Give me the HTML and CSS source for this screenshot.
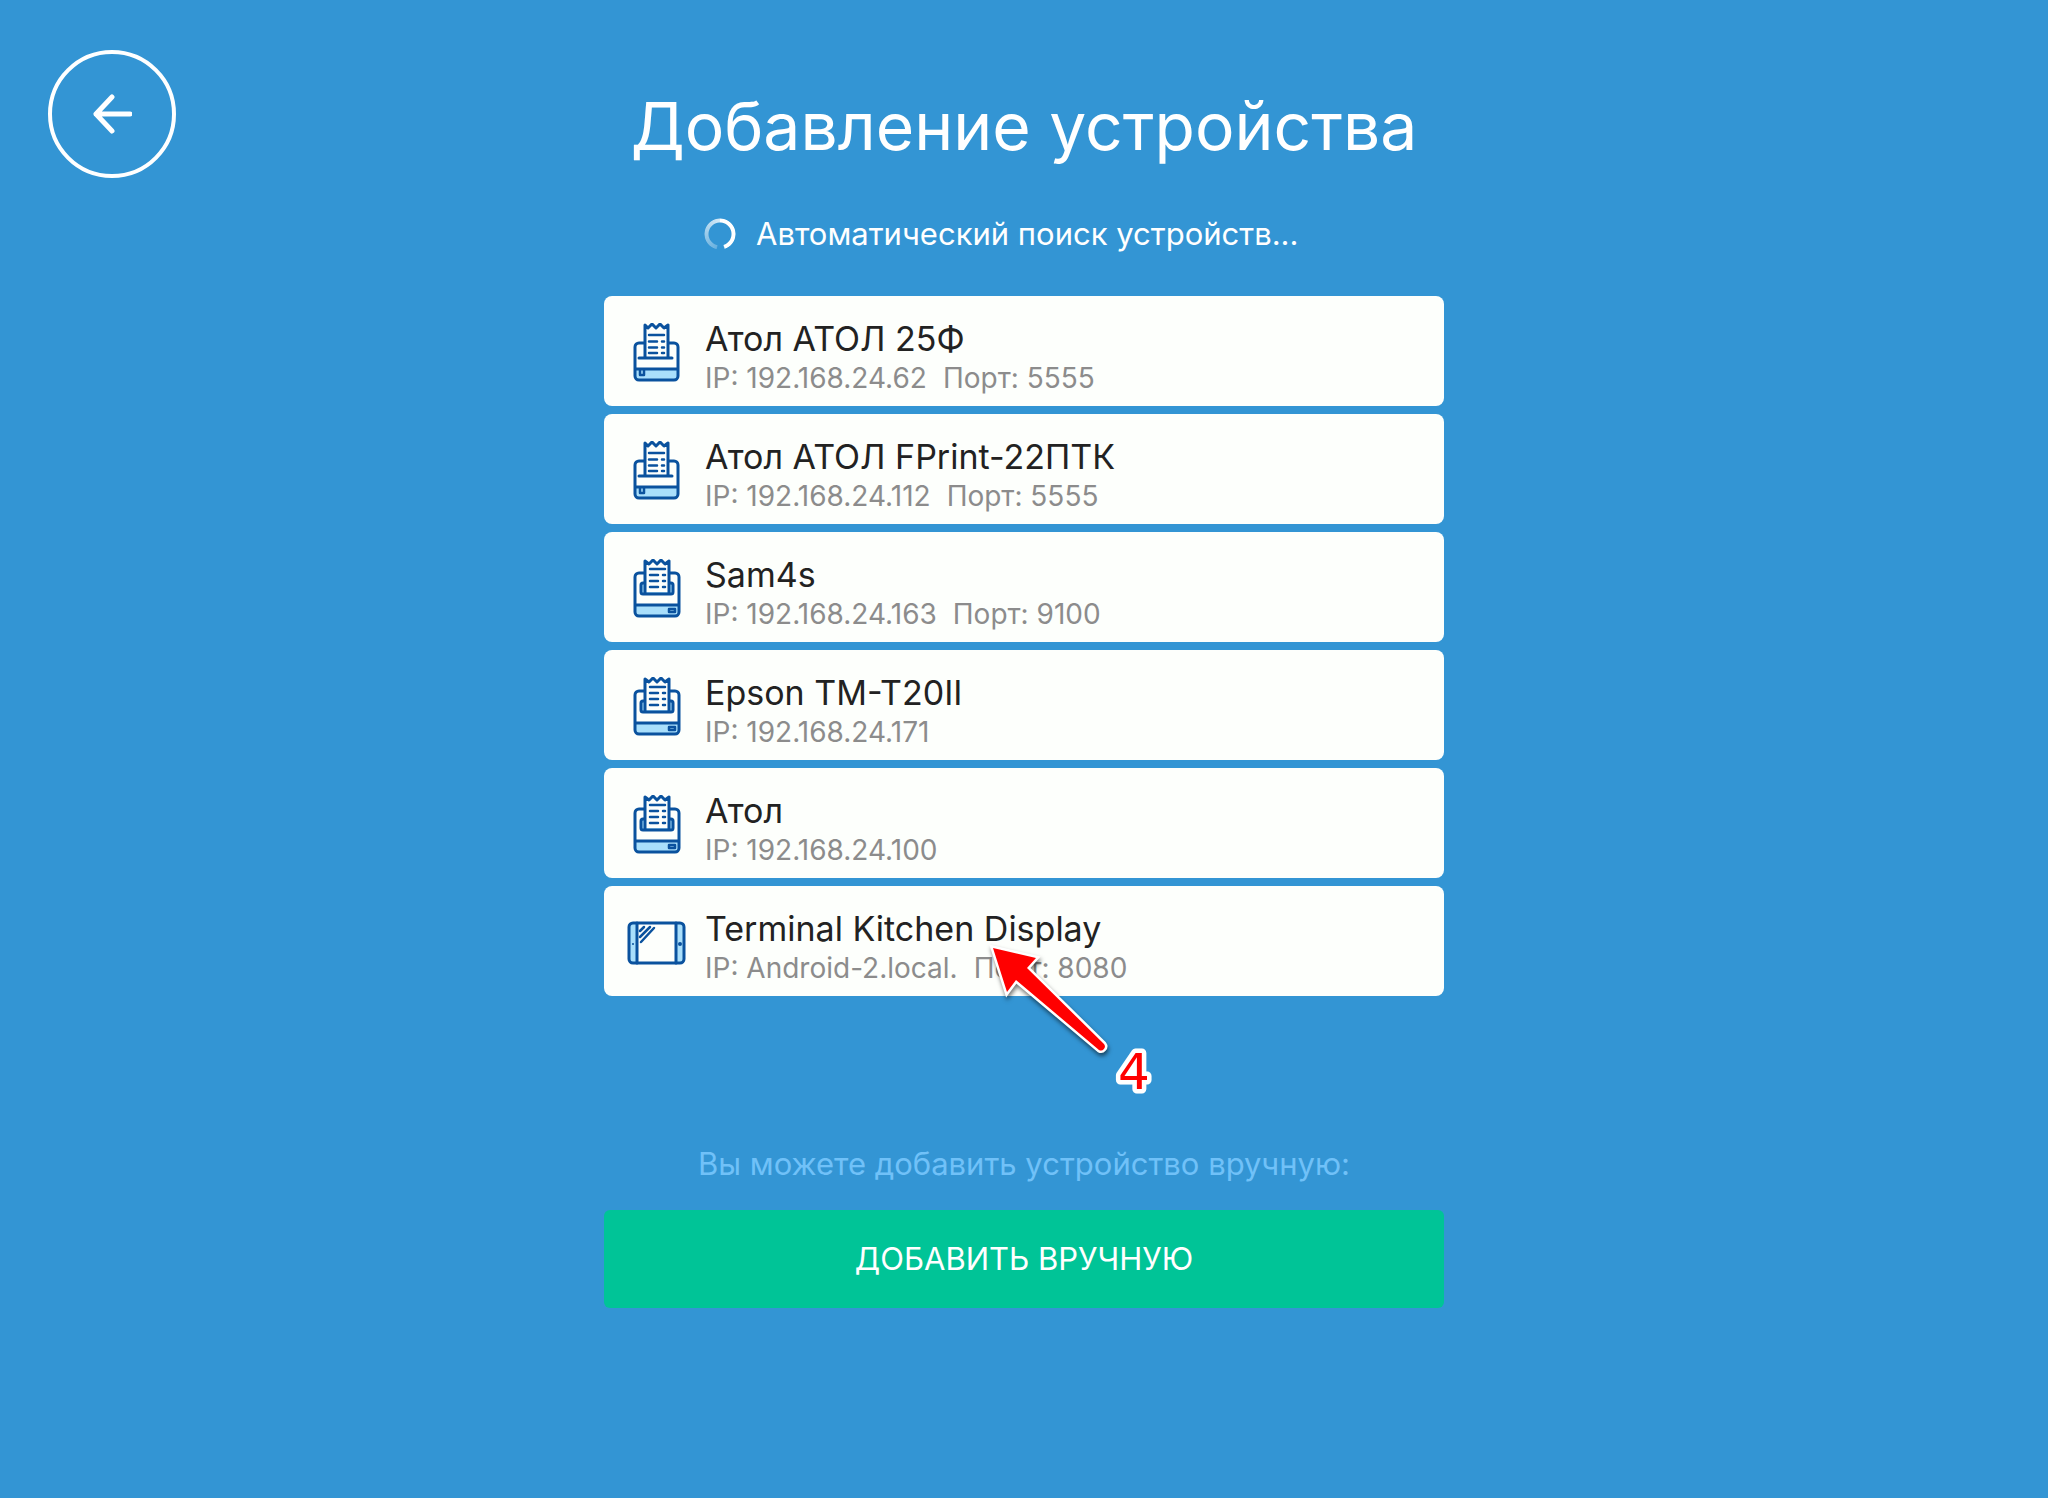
FILE: index.html
```html
<!DOCTYPE html>
<html lang="ru">
<head>
<meta charset="utf-8">
<meta name="viewport" content="width=device-width, initial-scale=1">
<title>Добавление устройства</title>
<link rel="stylesheet" href="styles.css">
</head>
<body>
<svg class="sprite" aria-hidden="true">
  <symbol id="icon-fiscal" viewBox="0 0 60 60">
    <path class="tint" d="M9 46h42v9a3 3 0 0 1-3 3H12a3 3 0 0 1-3-3z"/>
    <path class="line" d="M17 20h-5a4 4 0 0 0-4 4v29a4 4 0 0 0 4 4h35a4 4 0 0 0 4-4V24a4 4 0 0 0-4-4h-5M8 46h43M12 35h33M18 35V2l3 3 4-4 4 4 4-4 4 4 4-3v33"/>
    <path class="line fine" d="M22 12h15M22 18.500h8M22 24.500h8M22 30h8M35 18.500h2M35 24.500h2M35 30h2M13 47v5h4v-5"/>
  </symbol>
  <symbol id="icon-receipt" viewBox="0 0 60 60">
    <path class="tint" d="M9 46h43v9a3 3 0 0 1-3 3H12a3 3 0 0 1-3-3zM14 24h32v11H14z"/>
    <path class="paper" d="M18 2h24v31H18z"/>
    <path class="line" d="M17 14h-5a4 4 0 0 0-4 4v35a4 4 0 0 0 4 4h36a4 4 0 0 0 4-4V18a4 4 0 0 0-4-4h-5M8 46h44M18 35V2l4 3 4-4 4 4 4-4 4 4 4-3v33M18 24h-2a2 2 0 0 0-2 2v7a2 2 0 0 0 2 2h28a2 2 0 0 0 2-2v-7a2 2 0 0 0-2-2h-2"/>
    <path class="line fine" d="M23 10h15M23 16h8M23 22h8M23 28h8M36 16h2M36 22h2M36 28h2M42 50h6v3h-6z"/>
  </symbol>
  <symbol id="icon-tablet" viewBox="0 0 60 60">
    <path class="tint" d="M5 10h6v40H5a3 3 0 0 1-3-3V13a3 3 0 0 1 3-3zM50 10h5a3 3 0 0 1 3 3v34a3 3 0 0 1-3 3h-5z"/>
    <rect class="line" x="2" y="10" width="55" height="40" rx="4"/>
    <path class="line" d="M10 10v40M49 10v40"/>
    <path class="line fine" d="M13 18l4-4M13 24l10-10M14 29l13-14"/>
    <circle class="dot" cx="6" cy="31" r="1"/>
    <circle class="dot" cx="53" cy="31" r="2"/>
  </symbol>
</svg>

<div class="page">
  <button class="back" type="button" aria-label="Назад">
    <svg viewBox="0 0 40 40" aria-hidden="true"><path d="M38 20H4M20 3 4 20l16 17"/></svg>
  </button>

  <main class="content">
    <h1 class="title">Добавление устройства</h1>

    <p class="status" role="status">
      <span class="spinner"></span>
      <span>Автоматический поиск устройств...</span>
    </p>

    <ul class="devices">
      <li><button class="device" type="button">
        <svg class="device-icon" aria-hidden="true"><use href="#icon-fiscal"/></svg>
        <span class="device-text"><span class="device-name">Атол АТОЛ 25Ф</span>
        <span class="device-address"><span>IP: 192.168.24.62</span><span>Порт: 5555</span></span></span>
      </button></li>
      <li><button class="device" type="button">
        <svg class="device-icon" aria-hidden="true"><use href="#icon-fiscal"/></svg>
        <span class="device-text"><span class="device-name">Атол АТОЛ FPrint-22ПТК</span>
        <span class="device-address"><span>IP: 192.168.24.112</span><span>Порт: 5555</span></span></span>
      </button></li>
      <li><button class="device" type="button">
        <svg class="device-icon" aria-hidden="true"><use href="#icon-receipt"/></svg>
        <span class="device-text"><span class="device-name">Sam4s</span>
        <span class="device-address"><span>IP: 192.168.24.163</span><span>Порт: 9100</span></span></span>
      </button></li>
      <li><button class="device" type="button">
        <svg class="device-icon" aria-hidden="true"><use href="#icon-receipt"/></svg>
        <span class="device-text"><span class="device-name">Epson TM-T20II</span>
        <span class="device-address"><span>IP: 192.168.24.171</span></span></span>
      </button></li>
      <li><button class="device" type="button">
        <svg class="device-icon" aria-hidden="true"><use href="#icon-receipt"/></svg>
        <span class="device-text"><span class="device-name">Атол</span>
        <span class="device-address"><span>IP: 192.168.24.100</span></span></span>
      </button></li>
      <li class="marked"><button class="device" type="button">
        <svg class="device-icon" aria-hidden="true"><use href="#icon-tablet"/></svg>
        <span class="device-text"><span class="device-name">Terminal Kitchen Display</span>
        <span class="device-address"><span>IP: Android-2.local.</span><span>Порт: 8080</span></span></span>
      </button>
      <svg class="callout" viewBox="0 0 180 160">
        <path class="callout-arrow" d="M12 8 55 18 46 28 123 104a4 4 0 0 1-5 6L35 40 26 52z"/>
        <text class="callout-number" x="137" y="149">4</text>
      </svg></li>
    </ul>

    <p class="hint">Вы можете добавить устройство вручную:</p>
    <button class="add" type="button">ДОБАВИТЬ ВРУЧНУЮ</button>
  </main>
</div>
</body>
</html>
```
FILE: styles.css
```css
* {
  box-sizing: border-box;
}

body {
  margin: 0;
  min-height: 100vh;
  background: #3395d4;
  color: #fff;
  font-family: Inter, "Liberation Sans", sans-serif;
  font-size: 31px;
  line-height: 40px;
}

button {
  border: 0;
  font: inherit;
  cursor: pointer;
}

.sprite {
  display: block;
  width: 0;
  height: 0;
}

.page {
  display: grid;
  grid-template-columns: 1fr minmax(0, 840px) 1fr;
}

.back {
  display: grid;
  place-items: center;
  width: 128px;
  height: 128px;
  margin: 50px 48px;
  padding: 0;
  border: 4px solid #fff;
  border-radius: 50%;
  background: none;
}

.back svg {
  width: 40px;
  height: 40px;
  fill: none;
  stroke: #fff;
  stroke-width: 5;
  stroke-linecap: round;
  stroke-linejoin: round;
}

.content {
  padding: 82px 0;
}

.title {
  margin: 0 0 44px;
  font-size: 66px;
  font-weight: 400;
  line-height: 88px;
  text-align: center;
  white-space: nowrap;
}

.status {
  display: flex;
  align-items: center;
  gap: 20px;
  margin: 0 0 42px;
  padding-left: 100px;
}

.spinner {
  width: 32px;
  height: 32px;
  border-radius: 50%;
  background: conic-gradient(#fff 0 160deg, transparent 165deg 190deg, #ffffff44 195deg, #ffffffcc);
  mask: radial-gradient(closest-side, transparent 11px, #000 12px 15px, transparent 16px);
}

.devices {
  display: grid;
  gap: 8px;
  margin: 0 0 148px;
  padding: 0;
  list-style: none;
}

.device {
  display: flex;
  align-items: center;
  gap: 18px;
  width: 100%;
  padding: 14px 23px 10px;
  border-radius: 8px;
  background: #fdfffc;
  text-align: left;
}

.device-icon {
  width: 60px;
  height: 60px;
}

.tint {
  fill: #a9dffb;
}

.paper {
  fill: #fdfffc;
}

.line {
  fill: none;
  stroke: #0a529e;
  stroke-width: 3;
  stroke-linecap: round;
  stroke-linejoin: round;
}

.line.fine {
  stroke-width: 2.5;
}

.dot {
  fill: #0a529e;
}

.device-text {
  display: grid;
  padding-top: 7px;
}

.device-name {
  color: #222;
  font-size: 34px;
  line-height: 44px;
}

.device-address {
  display: flex;
  gap: 16px;
  color: #8c8c8c;
  font-size: 28px;
  line-height: 35px;
}

.marked {
  position: relative;
}

.callout {
  position: absolute;
  top: 54px;
  left: 377px;
  width: 180px;
  height: 160px;
  overflow: visible;
  pointer-events: none;
}

.callout-arrow {
  fill: #f00;
  stroke: #fff;
  stroke-width: 5;
  paint-order: stroke;
  filter: drop-shadow(1px 3px 2px #0008);
}

.callout-number {
  fill: #f00;
  stroke: #fff;
  stroke-width: 9;
  stroke-linejoin: round;
  paint-order: stroke;
  font-family: "DejaVu Sans", sans-serif;
  font-size: 50px;
}

.hint {
  margin: 0 0 26px;
  color: #70c1f8;
  text-align: center;
}

.add {
  width: 100%;
  padding: 29px;
  border-radius: 6px;
  background: #00c497;
  color: #fff;
}
```
